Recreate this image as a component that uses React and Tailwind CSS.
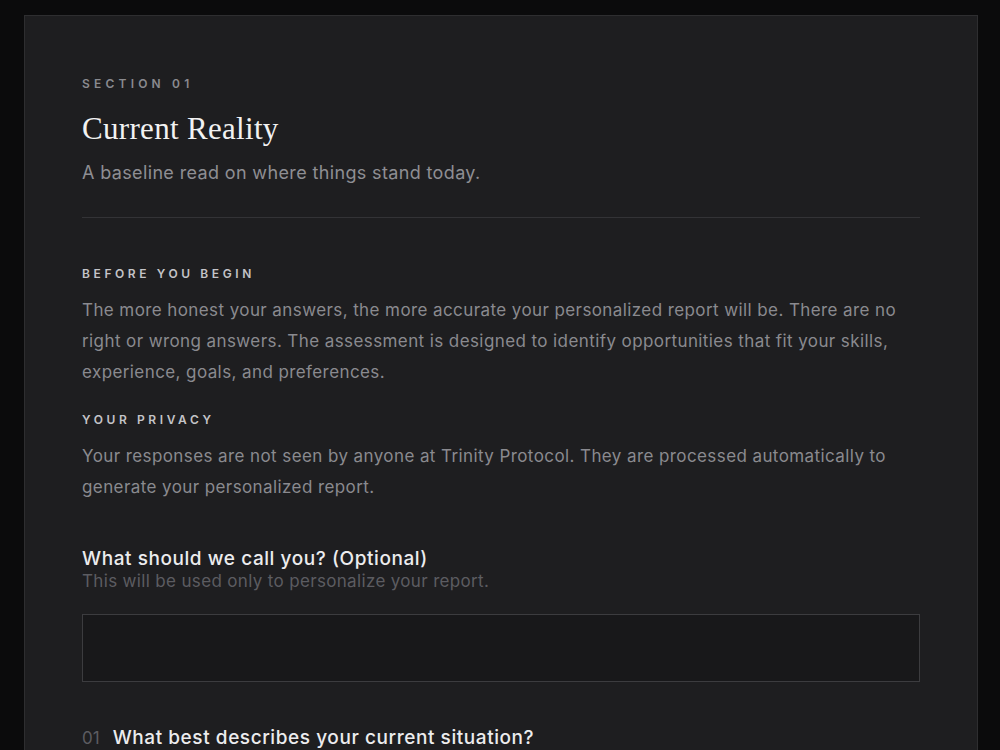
export default function App() {
  return (
    <div className="min-h-[750px] bg-[#0b0b0c] pt-[15px] pl-[24px] overflow-hidden" style={{ fontFamily: "Inter, 'Noto Sans', sans-serif" }}>
      <div className="w-[954px] h-[800px] bg-[#1e1e20] border border-[#2e2e30] px-[57px] pt-[59px]">
        <div className="text-[12px] leading-[18px] font-semibold tracking-[0.35em] text-[#8a8a8f]">SECTION 01</div>
        <h1 className="mt-[18px] text-[31px] leading-[36px] tracking-[0.01em] text-[#f2f2f2]" style={{ fontFamily: "'Liberation Serif', 'DejaVu Serif', serif" }}>Current Reality</h1>
        <p className="mt-[13px] text-[18px] leading-[26px] tracking-[0.02em] text-[#8e8e93]">A baseline read on where things stand today.</p>
        <div className="mt-[31px] h-px bg-[#333336]" />
        <div className="mt-[47px] text-[12px] leading-[18px] font-semibold tracking-[0.3em] text-[#c4c4c8]">BEFORE YOU BEGIN</div>
        <p className="mt-[12px] text-[17px] leading-[31px] tracking-[0.024em] text-[#8a8a8f]">
          The more honest your answers, the more accurate your personalized report will be. There are no right or wrong answers. The assessment is designed to identify opportunities that fit your skills, experience, goals, and preferences.
        </p>
        <div className="mt-[23px] text-[12px] leading-[18px] font-semibold tracking-[0.3em] text-[#c4c4c8]">YOUR PRIVACY</div>
        <p className="mt-[12px] text-[17px] leading-[31px] tracking-[0.024em] text-[#8a8a8f]">
          Your responses are not seen by anyone at Trinity Protocol. They are processed automatically to generate your personalized report.
        </p>
        <div className="mt-[44px] text-[19px] leading-[24px] font-medium tracking-[0.03em] text-[#ececee]">What should we call you? (Optional)</div>
        <div className="-mt-px text-[17px] leading-[22px] tracking-[0.02em] text-[#5c5c61]">This will be used only to personalize your report.</div>
        <div className="mt-[22px] h-[68px] border border-[#3c3c3f] bg-[#18181a]" />
        <div className="mt-[44px] flex items-baseline gap-[13px]">
          <span className="text-[17px] text-[#5c5c61]">01</span>
          <span className="text-[19px] leading-[24px] font-medium tracking-[0.03em] text-[#ececee]">What best describes your current situation?</span>
        </div>
      </div>
    </div>
  );
}
